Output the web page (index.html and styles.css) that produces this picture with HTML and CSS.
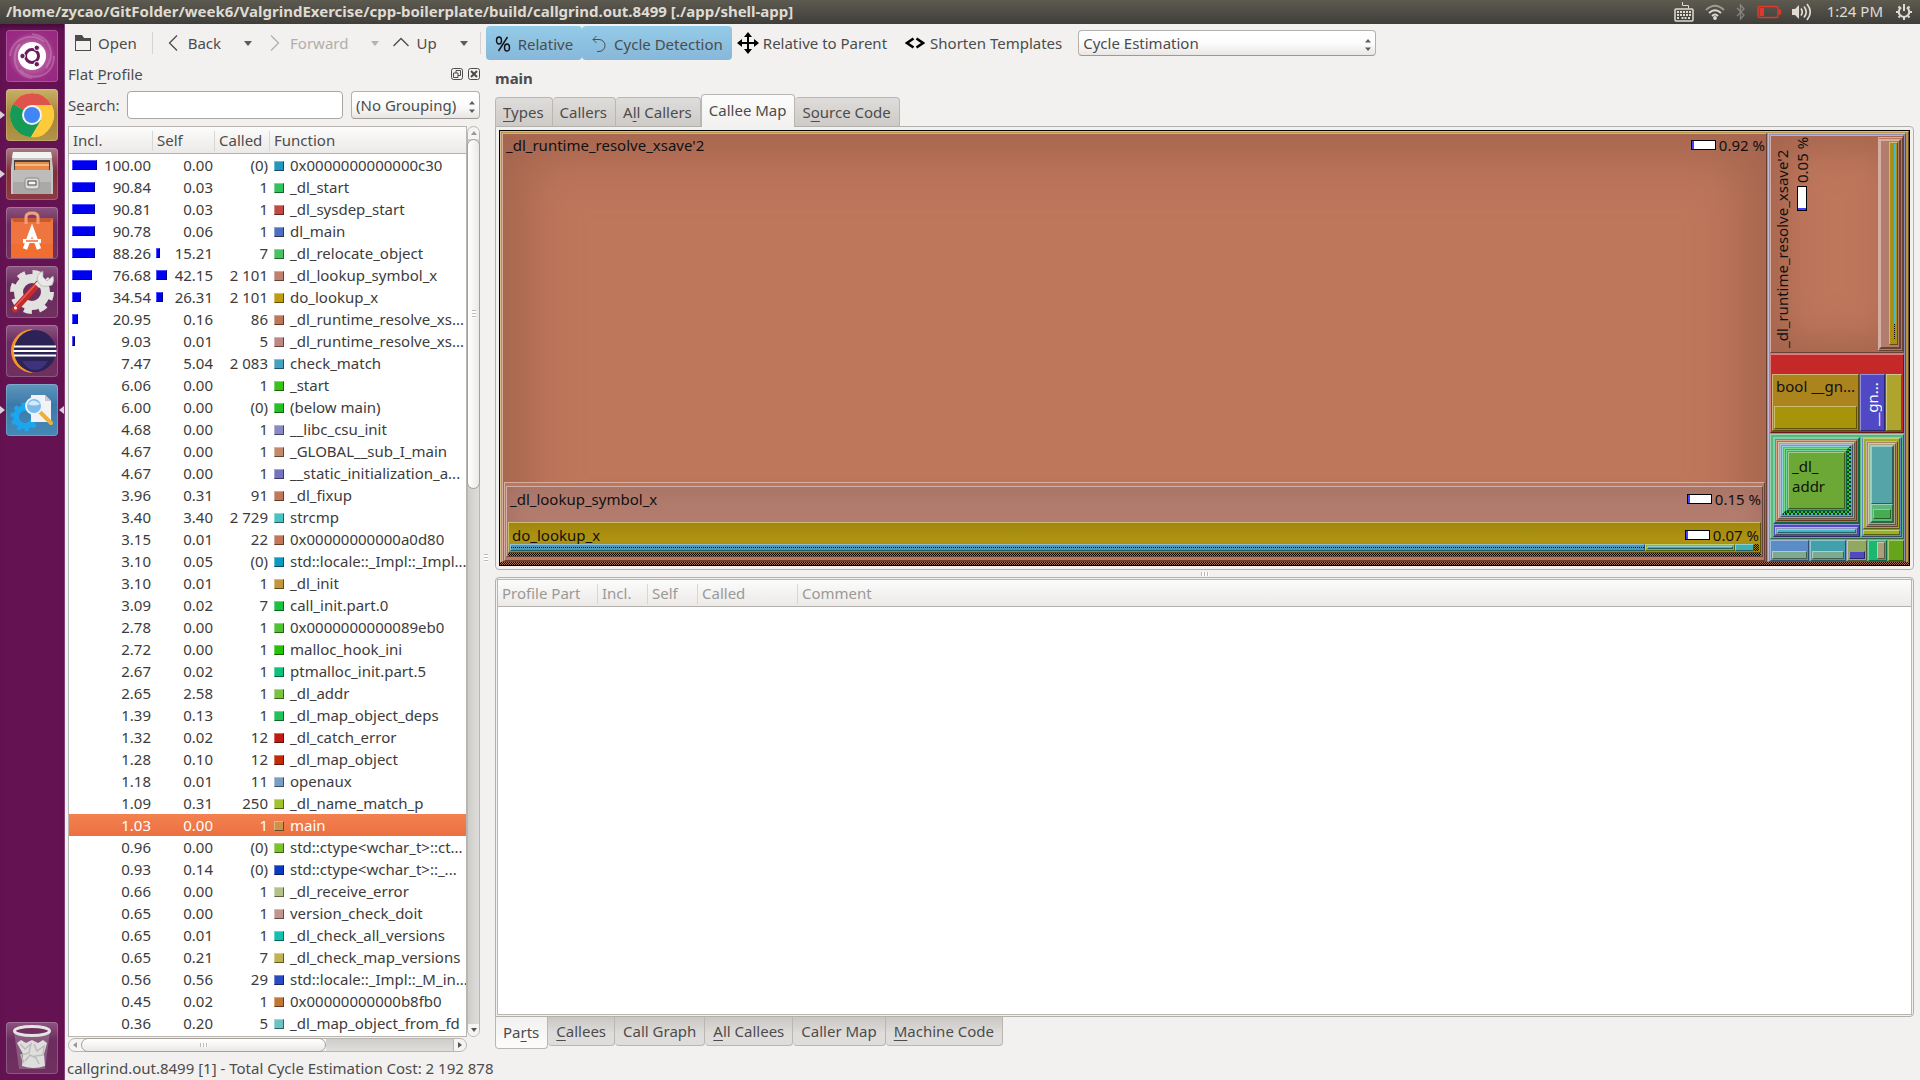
FILE: index.html
```html
<!DOCTYPE html>
<html lang="en">
<head>
<meta charset="utf-8">
<title>callgrind.out.8499 [./app/shell-app]</title>
<link rel="stylesheet" href="styles.css">
</head>
<body>
<header class="topbar">
  <h1 class="topbar-title">/home/zycao/GitFolder/week6/ValgrindExercise/cpp-boilerplate/build/callgrind.out.8499 [./app/shell-app]</h1>
  <div class="indicators">
    <svg width="20" height="20" viewBox="0 0 20 20" fill="none" stroke="#dfdbd2"><path d="M8.500 0v3.500h6v3"/><rect x="1" y="7" width="18" height="12" rx="1" stroke-width="1.500"/><path d="M3 10h14M3 13h14M3 16h3m1.500 0h5m1.500 0h3" stroke-width="2" stroke-dasharray="2 1"/></svg>
    <svg width="20" height="16" viewBox="0 0 20 16" fill="none" stroke="#dfdbd2" stroke-width="1.800"><path d="M1 6q9-8.500 18 0" opacity=".55"/><path d="M4 9q6-5.500 12 0M7 12q3-3 6 0"/><circle cx="10" cy="14" r="1" fill="#dfdbd2"/></svg>
    <svg class="dim" width="10" height="18" viewBox="0 0 10 18" fill="none" stroke="#dfdbd2" stroke-width="1.300"><path d="M1 5l7 7-3.500 4V2L8 6l-7 7"/></svg>
    <svg width="24" height="14" viewBox="0 0 24 14"><rect x="1" y="1.500" width="20" height="11" rx="1.500" fill="none" stroke="#df382c" stroke-width="1.500"/><path d="M2.500 3h4.500v8H2.500zM22 4.500h2v5h-2z" fill="#df382c"/></svg>
    <svg width="20" height="18" viewBox="0 0 20 18"><path d="M0 6h3l4-4v14l-4-4H0z" fill="#dfdbd2"/><path d="M9 5.500q2.500 3.500 0 7M12 3.500q4.500 5.500 0 11M15 1q6.500 8 0 16" fill="none" stroke="#dfdbd2" stroke-width="1.700"/></svg>
    <span class="clock">1:24 PM</span>
    <svg width="16" height="16" viewBox="0 0 16 16" fill="none" stroke="#dfdbd2" stroke-width="2"><path d="M5.200 3.400a5.200 5.200 0 1 0 5.600 0M8 0v7"/><path d="M8 13v3M0 8h3M13 8h3M2.500 2.500l1.500 1.500M13.500 2.500 12 4M2.500 13.500 4 12M13.500 13.500 12 12"/></svg>
  </div>
</header>
<div class="desktop">
<nav class="launcher" aria-label="Launcher">
  <a href="#dash" class="tile tile-dash" aria-label="Dash">
    <svg viewBox="0 0 52 52" width="52" height="52"><path d="M4 26C6 6 30 2 38 12M48 26c0 22-24 26-34 14M26 48C8 46 4 24 14 14M26 4c18 2 24 20 14 34" fill="none" stroke="#fff" stroke-width="2" opacity=".2"/><circle cx="26" cy="26" r="14" fill="#fff"/><circle cx="26" cy="26" r="6.500" fill="none" stroke="#6c1c5c" stroke-width="3"/><g fill="#6c1c5c" stroke="#fff" stroke-width="1"><circle cx="16.500" cy="26" r="2.700"/><circle cx="30.800" cy="17.800" r="2.700"/><circle cx="30.800" cy="34.200" r="2.700"/></g></svg></a>
  <a href="#chrome" class="tile tile-chrome running" aria-label="Chrome">
    <svg viewBox="0 0 52 52" width="52" height="52"><circle cx="26" cy="26" r="22" fill="#fcc934"/><path d="M26 26 7 15a22 22 0 0 1 38.500 1z" fill="#e0534a"/><path d="M26 26 7 15a22 22 0 0 0 18 33l10-17z" fill="#159a57"/><path d="M26 16h19.500q6 10-1 22T25 48l10-17z" fill="#fdca3b"/><circle cx="26" cy="26" r="10" fill="#f4f4f4"/><circle cx="26" cy="26" r="8" fill="#4285f4"/></svg></a>
  <a href="#files" class="tile tile-files running" aria-label="Files">
    <svg viewBox="0 0 52 52" width="52" height="52"><path d="M7 4h38l2 16v26H5V20z" fill="#c6c6c4"/><path d="M7 4h38l1 6H6z" fill="#f2f2f0"/><path d="M8 12h36v10H8z" fill="#45423e"/><path d="M9 14h34v8H9z" fill="#e88a45"/><path d="M9 17h34" stroke="#fce4c8"/><path d="M7 22h38v24H7z" fill="#aaa9a7"/><path d="M7 22h38v12H7z" fill="#bdbcba"/><rect x="19" y="30" width="14" height="11" rx="2.500" fill="#dcdcda" stroke="#888"/><rect x="22" y="33" width="8" height="4" fill="#f5f5f5" stroke="#444"/></svg></a>
  <a href="#software" class="tile" aria-label="Software">
    <svg viewBox="0 0 52 52" width="52" height="52"><path d="M5 11h42v40H5z" fill="#ee7540"/><path d="M5 37h42v14H5z" fill="#f26d30"/><path d="M5 11h42l-3 4H8z" fill="#c65a30"/><path d="M20 17v-7q0-4 6-4t6 4v7" fill="none" stroke="#f2a07c" stroke-width="3"/><path d="m19 42 7-19 7 19" fill="none" stroke="#fff" stroke-width="4.500"/><path d="M17 34h18" stroke="#fff" stroke-width="4"/><path d="M20 34h12" stroke="#ee6c30" stroke-width="1.500"/></svg></a>
  <a href="#settings" class="tile" aria-label="Settings">
    <svg viewBox="0 0 52 52" width="52" height="52"><circle cx="26" cy="26" r="13.500" fill="none" stroke="#e1e1df" stroke-width="9"/><circle cx="26" cy="26" r="19.500" fill="none" stroke="#e1e1df" stroke-width="5" stroke-dasharray="8 7.300"/><path d="m9 43 23-25" stroke="#c42a2a" stroke-width="6.500" stroke-linecap="round"/><path d="m8 42 22-24" stroke="#e8605a" stroke-width="1.500"/><circle cx="9.500" cy="42" r="1.500" fill="#fff"/><path d="m31 20 6-6" stroke="#e9e9e9" stroke-width="6"/><path d="M37 5q-8 4-5 11t14 3q3-5 1-9l-6 5-4-4z" fill="#e9e9e9" stroke="#aaa" stroke-width=".7"/></svg></a>
  <a href="#eclipse" class="tile" aria-label="Eclipse">
    <svg viewBox="0 0 52 52" width="52" height="52"><path d="M27 4a22 22 0 1 0 0 44q-16-8-16-22T27 4z" fill="#f4962a"/><circle cx="29" cy="26" r="21" fill="#2c2255"/><path d="M16 36h26q-5 9-13 9t-13-9z" fill="#3e317e"/><path d="M8 21.500h42M7.500 26h43M8 30.500h42" stroke="#fff" stroke-width="2.200"/></svg></a>
  <a href="#kcachegrind" class="tile tile-active running" aria-label="KCachegrind" aria-current="true">
    <svg viewBox="0 0 52 52" width="52" height="52"><circle cx="19" cy="33" r="9" fill="none" stroke="#1ba6ee" stroke-width="6"/><circle cx="19" cy="33" r="12.500" fill="none" stroke="#1ba6ee" stroke-width="4" stroke-dasharray="4 3.850"/><path d="M25 11h14l6 6v21H25z" fill="#f3f3f6"/><path d="M39 11v6h6z" fill="#c8c8d4"/><path d="m34 28 11 11" stroke="#e9b13c" stroke-width="4" stroke-linecap="round"/><circle cx="28" cy="22" r="8" fill="#7db9ea" stroke="#e9f3fb" stroke-width="2"/><path d="M22 20q5-7 12 0-6 3-12 0z" fill="#d4ebfb"/></svg></a>
  <a href="#trash" class="tile tile-trash" aria-label="Trash">
    <svg viewBox="0 0 52 52" width="52" height="52"><path d="M8 9h36l-5 38H13z" fill="#9d7896" opacity=".6"/><path d="m11 21 4-3 5 3 6-3 6 3 5-3 4 3-3 11 1 12q-11 4-23 0l1-12z" fill="#dededc"/><path d="m14 22 5 5 6-5-2 9-8 2 3 8m10-19 3 7 7-5-1 9-8 1 4 8m-14-3 5-6 6 3" fill="none" stroke="#bcbcba" stroke-width="1.500"/><ellipse cx="26" cy="9" rx="17.500" ry="4.500" fill="#70305f" stroke="#e4e4e2" stroke-width="3"/></svg></a>
</nav>
<main class="window">
  <div class="toolbar" role="toolbar">
    <button class="tool tool-open"><svg width="16" height="16" viewBox="0 0 16 16"><path d="M.5 0H7l2 3h7v13H0V0z" fill="#4c4c4c"/><path d="M1 6h14v9H1z" fill="#f2f1f0"/></svg>Open</button>
    <span class="sep"></span>
    <button class="tool tool-nav"><svg width="10" height="16" viewBox="0 0 10 16" fill="none" stroke="#4c4c4c" stroke-width="1.300"><path d="M9 .5 1.500 8 9 15.500"/></svg>Back</button>
    <button class="drop" aria-label="Back history"></button>
    <button class="tool tool-nav" disabled><svg width="10" height="16" viewBox="0 0 10 16" fill="none" stroke="#b0b0b0" stroke-width="1.300"><path d="M1 .5 8.500 8 1 15.500"/></svg>Forward</button>
    <button class="drop drop-mid" disabled aria-label="Forward history"></button>
    <button class="tool tool-up"><svg width="16" height="16" viewBox="0 0 16 16" fill="none" stroke="#4c4c4c" stroke-width="1.300"><path d="M.5 11 8 3.500 15.500 11"/></svg>Up</button>
    <button class="drop drop-end" aria-label="Up history"></button>
    <span class="sep sep-tight"></span>
    <button class="tool toggle" aria-pressed="true"><svg width="16" height="16" viewBox="0 0 16 16" fill="none" stroke="#111" stroke-width="1.400"><ellipse cx="4" cy="4.500" rx="2.500" ry="3.500"/><ellipse cx="12" cy="11.500" rx="2.500" ry="3.500"/><path d="M12.500 1l-9 14"/></svg>Relative</button>
    <button class="tool toggle toggle-wide" aria-pressed="true"><svg width="16" height="16" viewBox="0 0 16 16" fill="none" stroke="#4c4c4c"><path d="M5.500 0 2 3.500 5.500 7M2 3.500h6a6 6 0 0 1 0 12H6"/></svg>Cycle Detection</button>
    <button class="tool tool-parent"><svg width="22" height="22" viewBox="0 0 22 22"><path d="M11 2v18M2 11h18" stroke="#000" stroke-width="2"/><path d="m11 0 4 5H7zM11 22l4-5H7zM0 11l5-4v8zM22 11l-5-4v8z"/></svg>Relative to Parent</button>
    <button class="tool tool-shorten"><svg width="20" height="12" viewBox="0 0 20 12" fill="none" stroke="#000" stroke-width="2.600"><path d="M8.500 1.500 2 6l6.500 4.500M11.500 1.500 18 6l-6.500 4.500"/></svg>Shorten Templates</button>
    <span class="combo combo-event"><select aria-label="Primary event type"><option>Cycle Estimation</option></select><svg width="6" height="12" viewBox="0 0 6 12"><path d="M0 3.500h6L3 0zM0 8.500h6L3 12z" fill="#5c5c5c"/></svg></span>
  </div>
  <div class="work">
    <section class="dock">
      <div class="dock-title"><h2>Flat <u>P</u>rofile</h2>
        <button class="mini" aria-label="Float"><svg width="12" height="12" viewBox="0 0 12 12" fill="none" stroke="#4c4c4c"><rect x=".5" y=".5" width="11" height="11" rx="2"/><path d="M5 5V2.500h4.500v5H7M2.500 5H7v4.500H2.500z"/></svg></button>
        <button class="mini" aria-label="Close"><svg width="12" height="12" viewBox="0 0 12 12" fill="none" stroke="#4c4c4c"><rect x=".5" y=".5" width="11" height="11" rx="2"/><path d="m3 3 6 6M9 3 3 9" stroke-width="2"/></svg></button>
      </div>
      <div class="search"><label for="q">S<u>e</u>arch:</label><input id="q" type="text">
        <span class="combo combo-group"><select aria-label="Grouping"><option>(No Grouping)</option></select><svg width="6" height="12" viewBox="0 0 6 12"><path d="M0 3.500h6L3 0zM0 8.500h6L3 12z" fill="#5c5c5c"/></svg></span></div>
      <div class="list">
        <div class="list-view">
        <table class="profile">
          <colgroup><col class="c-incl"><col class="c-self"><col class="c-called"><col></colgroup>
          <thead><tr><th>Incl.</th><th>Self</th><th>Called</th><th>Function</th></tr></thead>
          <tbody>
<tr><td><i class="bar" style="width:25px"></i>100.00</td><td>0.00</td><td>(0)</td><td><i class="sw" style="--c:#2596be"></i>0x0000000000000c30</td></tr>
<tr><td><i class="bar" style="width:23px"></i>90.84</td><td>0.03</td><td>1</td><td><i class="sw" style="--c:#32c25e"></i>_dl_start</td></tr>
<tr><td><i class="bar" style="width:23px"></i>90.81</td><td>0.03</td><td>1</td><td><i class="sw" style="--c:#c24a42"></i>_dl_sysdep_start</td></tr>
<tr><td><i class="bar" style="width:23px"></i>90.78</td><td>0.06</td><td>1</td><td><i class="sw" style="--c:#4e6ec0"></i>dl_main</td></tr>
<tr><td><i class="bar" style="width:23px"></i>88.26</td><td><i class="bar" style="width:4px"></i>15.21</td><td>7</td><td><i class="sw" style="--c:#46c262"></i>_dl_relocate_object</td></tr>
<tr><td><i class="bar" style="width:20px"></i>76.68</td><td><i class="bar" style="width:11px"></i>42.15</td><td>2 101</td><td><i class="sw" style="--c:#c08070"></i>_dl_lookup_symbol_x</td></tr>
<tr><td><i class="bar" style="width:9px"></i>34.54</td><td><i class="bar" style="width:7px"></i>26.31</td><td>2 101</td><td><i class="sw" style="--c:#c09c10"></i>do_lookup_x</td></tr>
<tr><td><i class="bar" style="width:6px"></i>20.95</td><td>0.16</td><td>86</td><td><i class="sw" style="--c:#c0765a"></i>_dl_runtime_resolve_xs...</td></tr>
<tr><td><i class="bar" style="width:3px"></i>9.03</td><td>0.01</td><td>5</td><td><i class="sw" style="--c:#c08686"></i>_dl_runtime_resolve_xs...</td></tr>
<tr><td>7.47</td><td>5.04</td><td>2 083</td><td><i class="sw" style="--c:#46a0c2"></i>check_match</td></tr>
<tr><td>6.06</td><td>0.00</td><td>1</td><td><i class="sw" style="--c:#3ac21a"></i>_start</td></tr>
<tr><td>6.00</td><td>0.00</td><td>(0)</td><td><i class="sw" style="--c:#22c222"></i>(below main)</td></tr>
<tr><td>4.68</td><td>0.00</td><td>1</td><td><i class="sw" style="--c:#8a8ac2"></i>__libc_csu_init</td></tr>
<tr><td>4.67</td><td>0.00</td><td>1</td><td><i class="sw" style="--c:#c28a6a"></i>_GLOBAL__sub_I_main</td></tr>
<tr><td>4.67</td><td>0.00</td><td>1</td><td><i class="sw" style="--c:#7672c2"></i>__static_initialization_a...</td></tr>
<tr><td>3.96</td><td>0.31</td><td>91</td><td><i class="sw" style="--c:#c2765a"></i>_dl_fixup</td></tr>
<tr><td>3.40</td><td>3.40</td><td>2 729</td><td><i class="sw" style="--c:#4ac2c2"></i>strcmp</td></tr>
<tr><td>3.15</td><td>0.01</td><td>22</td><td><i class="sw" style="--c:#c2765a"></i>0x00000000000a0d80</td></tr>
<tr><td>3.10</td><td>0.05</td><td>(0)</td><td><i class="sw" style="--c:#0a9ac2"></i>std::locale::_Impl::_Impl...</td></tr>
<tr><td>3.10</td><td>0.01</td><td>1</td><td><i class="sw" style="--c:#c2963a"></i>_dl_init</td></tr>
<tr><td>3.09</td><td>0.02</td><td>7</td><td><i class="sw" style="--c:#1ac242"></i>call_init.part.0</td></tr>
<tr><td>2.78</td><td>0.00</td><td>1</td><td><i class="sw" style="--c:#4ec232"></i>0x0000000000089eb0</td></tr>
<tr><td>2.72</td><td>0.00</td><td>1</td><td><i class="sw" style="--c:#26c206"></i>malloc_hook_ini</td></tr>
<tr><td>2.67</td><td>0.02</td><td>1</td><td><i class="sw" style="--c:#0ac27a"></i>ptmalloc_init.part.5</td></tr>
<tr><td>2.65</td><td>2.58</td><td>1</td><td><i class="sw" style="--c:#7ac242"></i>_dl_addr</td></tr>
<tr><td>1.39</td><td>0.13</td><td>1</td><td><i class="sw" style="--c:#22c25a"></i>_dl_map_object_deps</td></tr>
<tr><td>1.32</td><td>0.02</td><td>12</td><td><i class="sw" style="--c:#c21a12"></i>_dl_catch_error</td></tr>
<tr><td>1.28</td><td>0.10</td><td>12</td><td><i class="sw" style="--c:#c22a06"></i>_dl_map_object</td></tr>
<tr><td>1.18</td><td>0.01</td><td>11</td><td><i class="sw" style="--c:#7a9ec2"></i>openaux</td></tr>
<tr><td>1.09</td><td>0.31</td><td>250</td><td><i class="sw" style="--c:#a2c22e"></i>_dl_name_match_p</td></tr>
<tr class="selected"><td>1.03</td><td>0.00</td><td>1</td><td><i class="sw" style="--c:#cc924a"></i>main</td></tr>
<tr><td>0.96</td><td>0.00</td><td>(0)</td><td><i class="sw" style="--c:#7ac22e"></i>std::ctype&lt;wchar_t&gt;::ct...</td></tr>
<tr><td>0.93</td><td>0.14</td><td>(0)</td><td><i class="sw" style="--c:#0a3ac2"></i>std::ctype&lt;wchar_t&gt;::_...</td></tr>
<tr><td>0.66</td><td>0.00</td><td>1</td><td><i class="sw" style="--c:#b4c28a"></i>_dl_receive_error</td></tr>
<tr><td>0.65</td><td>0.00</td><td>1</td><td><i class="sw" style="--c:#c2968e"></i>version_check_doit</td></tr>
<tr><td>0.65</td><td>0.01</td><td>1</td><td><i class="sw" style="--c:#12c2ae"></i>_dl_check_all_versions</td></tr>
<tr><td>0.65</td><td>0.21</td><td>7</td><td><i class="sw" style="--c:#c2b252"></i>_dl_check_map_versions</td></tr>
<tr><td>0.56</td><td>0.56</td><td>29</td><td><i class="sw" style="--c:#2a4ac2"></i>std::locale::_Impl::_M_in...</td></tr>
<tr><td>0.45</td><td>0.02</td><td>1</td><td><i class="sw" style="--c:#c27636"></i>0x00000000000b8fb0</td></tr>
<tr><td>0.36</td><td>0.20</td><td>5</td><td><i class="sw" style="--c:#6ac2c2"></i>_dl_map_object_from_fd</td></tr>
          </tbody>
        </table>
        </div>
        <div class="vscroll"><span class="arrow-cap"><svg width="6" height="4" viewBox="0 0 6 4"><path d="M0 4h6L3 0z" fill="#999"/></svg></span><span class="vthumb"><i class="grip"></i></span><span class="arrow-cap arrow-down"><svg width="6" height="4" viewBox="0 0 6 4"><path d="M0 0h6L3 4z" fill="#555"/></svg></span></div>
      </div>
      <div class="hscroll"><span class="cap"><svg width="4" height="6" viewBox="0 0 4 6"><path d="M4 0v6L0 3z" fill="#999"/></svg></span><span class="hthumb"><i class="grip grip-x"></i></span><span class="track"></span><span class="cap"><svg width="4" height="6" viewBox="0 0 4 6"><path d="M0 0v6l4-3z" fill="#555"/></svg></span></div>
    </section>
    <div class="split-v"><i class="grip"></i></div>
    <section class="detail">
      <h2 class="detail-title">main</h2>
      <div class="tabs tabs-top" role="tablist">
        <button role="tab"><u>T</u>ypes</button><button role="tab">Callers</button><button role="tab">A<u>l</u>l Callers</button><button role="tab" class="on" aria-selected="true">Callee Map</button><button role="tab">S<u>o</u>urce Code</button>
      </div>
      <div class="pane pane-map">
        <div class="treemap">
          <div class="cell root c-main">
            <div class="cell major cushion c-brown">
              <div class="caption"><span>_dl_runtime_resolve_xsave'2</span><span class="cost"><i class="gauge"></i>0.92 %</span></div>
              <div class="cell fixup c-brown">
                <div class="cell lookup c-rose">
                  <div class="caption"><span>_dl_lookup_symbol_x</span><span class="cost"><i class="gauge"></i>0.15 %</span></div>
                  <div class="cell dolookup c-gold">
                    <div class="caption"><span>do_lookup_x</span><span class="cost"><i class="gauge"></i>0.07 %</span></div>
                    <div class="strip"><div class="cell c-sky"><i class="dots"></i></div><div class="cell c-lime thin"><i class="cell c-teal"></i></div><div class="cell c-teal short"></div><i class="dither"></i></div>
                  </div>
                  <i class="hatch"></i>
                </div>
              </div>
            </div>
            <div class="cell side c-lav">
              <div class="cell resolve cushion c-brown">
                <span class="vtext">_dl_runtime_resolve_xsave'2</span>
                <span class="vtext vcost"><i class="gauge"></i>0.05 %</span>
                <div class="cell slim c-brown"><div class="cell c-brown"><div class="cell c-rose"><div class="cell c-gold"><i class="cyanline"></i><i class="vdots"></i></div></div></div></div>
              </div>
              <div class="cell catch c-red">
                <div class="cell bool c-amber"><span>bool __gn...</span><div class="cell c-olive"></div></div>
                <div class="cell gn c-blue"><span class="vtext">__gn...</span></div>
                <div class="cell mustard c-mustard"></div>
              </div>
              <div class="cell init c-mint">
                <div class="init-left">
                  <div class="cell c-green addr"><div class="cell c-green"><div class="cell c-orange"><div class="cell c-cream"><div class="cell c-lav"><div class="cell c-cyan shade"><div class="cell c-bright shade"><div class="cell c-green"><div class="cell c-leaf"><span>_dl_<br>addr</span></div></div></div></div></div></div></div></div></div>
                  <div class="cell bluebar c-blue"><div class="cell c-lav"><div class="cell c-cyan"></div></div></div>
                </div>
                <div class="cell peri c-peri"><div class="cell c-lime grow"><div class="cell c-rose"><div class="cell c-cream"><div class="cell c-mint"><div class="cell c-aqua grow"></div><div class="cell c-mint foot"><div class="cell c-grass"></div></div></div></div></div></div><div class="cell c-lime base"></div></div>
              </div>
              <div class="bottoms">
                <div class="cell b1 c-steel"><div class="cell c-sage"></div></div><div class="cell b2 c-aqua2"><div class="cell c-sage"></div></div><div class="cell b3 c-moss"><div class="cell c-blue"></div></div><div class="cell b4 c-green"><div class="cell c-tan"></div></div><div class="cell b5 c-leaf2"></div>
              </div>
            </div>
          </div>
          <i class="hatch"></i>
        </div>
      </div>
      <div class="split-h"><i class="grip grip-x"></i></div>
      <div class="pane pane-parts">
        <div class="parts-view">
          <table class="parts"><colgroup><col class="p-part"><col class="p-incl"><col class="p-self"><col class="p-called"><col></colgroup><thead><tr><th>Profile Part</th><th>Incl.</th><th>Self</th><th>Called</th><th>Comment</th></tr></thead></table>
        </div>
      </div>
      <div class="tabs tabs-bottom" role="tablist">
        <button role="tab" class="on" aria-selected="true">Pa<u>r</u>ts</button><button role="tab"><u>C</u>allees</button><button role="tab">Call Graph</button><button role="tab"><u>A</u>ll Callees</button><button role="tab">Caller Map</button><button role="tab"><u>M</u>achine Code</button>
      </div>
    </section>
  </div>
  <footer class="status">callgrind.out.8499 [1] - Total Cycle Estimation Cost: 2 192 878</footer>
</main>
</div>
</body>
</html>
```
FILE: styles.css
```css
* { box-sizing: border-box; }
body {
  margin: 0;
  height: 100vh;
  display: flex;
  flex-direction: column;
  overflow: hidden;
  background: #f2f1f0;
  color: #4c4c4c;
  font: 15px/22px "Noto Sans", "Open Sans", sans-serif;
}
button, input, select { font: inherit; color: inherit; }
button { background: none; border: 0; padding: 0; white-space: nowrap; }
h1, h2 { margin: 0; font-size: inherit; font-weight: 400; }
u { text-underline-offset: 3px; text-decoration-thickness: 1px; }
svg { display: block; flex: none; }
i { display: block; }

/* top panel */
.topbar {
  flex: none;
  height: 24px;
  padding: 0 8px 0 6px;
  display: flex;
  align-items: center;
  justify-content: space-between;
  background: linear-gradient(#5d5a50, #3f3e39);
  color: #dfdbd2;
}
.topbar-title { font-size: 15px; line-height: 20px; padding-bottom: 2px; font-weight: 700; white-space: nowrap; }
.indicators { display: flex; align-items: center; gap: 11px; }
.indicators .dim { opacity: .4; }
.clock { margin: 0 2px 0 4px; line-height: 20px; padding-bottom: 2px; }

.desktop { flex: 1; min-height: 0; display: flex; }

/* launcher */
.launcher {
  flex: none;
  width: 65px;
  padding: 6px;
  display: flex;
  flex-direction: column;
  gap: 7px;
  background: #651253;
  border-right: 1px solid #83417a;
  box-shadow: inset 0 6px 6px -4px #3c0a31;
}
.tile {
  position: relative;
  width: 52px;
  height: 52px;
  border-radius: 4px;
  background: linear-gradient(#8d5480, #6b2c5f 35%, #70305f);
  box-shadow: inset 0 0 0 1px #ffffff33;
}
.tile-dash { background: radial-gradient(circle, #d79bc5, #9b2c83 65%, #962580); }
.tile-chrome { background: linear-gradient(#c9b069, #a48435 50%, #b3954a); }
.tile-files { background: linear-gradient(#a87a85, #81303a 45%, #8b3a42); }
.tile-active { background: linear-gradient(#5f96bd, #3b7aa8 40%, #4589b7); }
.tile-trash { margin-top: auto; }
.running::before, .tile-active::after {
  content: "";
  position: absolute;
  top: 22px;
  left: -6px;
  border: 4px solid transparent;
  border-left: 5px solid #d8d0d6;
  border-right: 0;
}
.tile-active::after {
  left: auto;
  right: -6px;
  border-left: 0;
  border-right: 5px solid #d8d0d6;
}

.window { flex: 1; min-width: 0; display: flex; flex-direction: column; }

/* toolbar */
.toolbar { flex: none; height: 40px; padding: 2px 0 4px 10px; display: flex; align-items: center; }
.tool { height: 34px; display: flex; align-items: center; gap: 7px; }
.tool:disabled { color: #b0aeab; }
.tool-nav { gap: 10px; }
.sep { width: 1px; height: 22px; margin: 0 15px; background: #d5d2cf; }
.sep-tight { margin: 0 5px 0 11px; }
.drop { width: 49px; height: 34px; padding-left: 23px; display: flex; align-items: center; }
.drop-mid { width: 45px; }
.drop-end { width: 32px; }
.drop::before { content: ""; border: 4px solid transparent; border-top: 5px solid #5a5a5a; border-bottom: 0; }
.drop:disabled::before { border-top-color: #b5b3b0; }
.toggle {
  padding: 2px 9px 0;
  border-radius: 4px;
  background: linear-gradient(#93cce8, #87b7d9);
}
.toggle-wide { margin-right: 5px; }
.tool-parent { gap: 4px; margin-right: 18px; }
.tool-shorten { gap: 5px; margin-right: 16px; }

.combo { position: relative; flex: none; }
.combo select {
  appearance: none;
  width: 100%;
  height: 100%;
  padding: 0 4px;
  border: 1px solid #b4b1ad;
  border-bottom-color: #9d9a96;
  border-radius: 4px;
  background: linear-gradient(#fff, #fcfcfc 50%, #e9e7e5);
}
.combo svg { position: absolute; right: 5px; top: 9px; }
.combo-event { width: 298px; height: 26px; }
.combo-group { width: 129px; height: 28px; }
.combo-group svg { top: 10px; }

/* flat profile dock */
.work { flex: 1; min-height: 0; display: flex; padding: 0 6px 0 3px; }
.dock { flex: none; width: 412px; display: flex; flex-direction: column; }
.dock-title { height: 20px; margin-bottom: 2px; display: flex; align-items: center; gap: 5px; }
.dock-title h2 { flex: 1; }
.search { height: 28px; margin: 5px 0 7px; display: flex; align-items: center; }
.search input {
  flex: 1;
  min-width: 0;
  height: 28px;
  margin: 0 8px 0 7px;
  border: 1px solid #aaa7a3;
  border-radius: 4px;
  background: #fff;
}
.list { flex: 1; min-height: 0; display: flex; }
.list-view { flex: 1; min-width: 0; overflow: hidden; background: #fff; border: 1px solid #b9b6b2; }
table { width: 100%; table-layout: fixed; border-collapse: separate; border-spacing: 0; }
th {
  height: 27px;
  padding: 0 4px;
  text-align: left;
  font-weight: 400;
  white-space: nowrap;
  background: linear-gradient(90deg, #d9d7d4, #d9d7d4) right 4px / 1px 20px no-repeat, linear-gradient(#fcfcfc, #eceae8);
  border-bottom: 1px solid #b4b1ad;
}
th:last-child { background: linear-gradient(#fcfcfc, #eceae8); }
.c-incl { width: 84px; }
.c-self { width: 62px; }
.c-called { width: 55px; }
.profile th { padding-left: 4px; }
.profile td { height: 22px; padding: 0 2px 0 3px; text-align: right; white-space: nowrap; color: #3c3c3c; }
.profile td:last-child { text-align: left; padding: 0 0 0 4px; }
.bar { float: left; height: 10px; margin-top: 6px; background: #0000f0; border: 1px solid; border-color: #5050ff #00008c #00008c #5050ff; }
.sw {
  display: inline-block;
  width: 10px;
  height: 10px;
  margin-right: 6px;
  background: var(--c);
  border: 1px solid;
  border-color: color-mix(in srgb, var(--c), #fff 35%) color-mix(in srgb, var(--c), #000 50%) color-mix(in srgb, var(--c), #000 50%) color-mix(in srgb, var(--c), #fff 35%);
}
.profile .selected td { color: #fff; background: linear-gradient(#f38150, #ec7040); }

.vscroll { width: 13px; display: flex; flex-direction: column; background: linear-gradient(90deg, #cfcdca, #e0dedc); border: 1px solid #b9b6b2; border-radius: 7px; }
.vthumb { height: 350px; background: linear-gradient(90deg, #fff, #ebe9e7); border: 1px solid #a3a09c; border-radius: 7px; display: flex; align-items: center; justify-content: center; margin: 0 -1px; }
.arrow-cap { height: 12px; display: flex; align-items: center; justify-content: center; background: #f5f4f3; border-radius: 6px 6px 0 0; }
.arrow-down { margin-top: auto; border-radius: 0 0 6px 6px; }
.grip { width: 4px; height: 8px; background: repeating-linear-gradient(#bbb8b4 0 1px, #fff 1px 3px); }
.grip-x { width: 8px; height: 4px; background: repeating-linear-gradient(90deg, #bbb8b4 0 1px, #fff 1px 3px); }
.hscroll { flex: none; height: 14px; width: 399px; margin-top: 1px; display: flex; border: 1px solid #b9b6b2; border-radius: 7px; background: #f5f4f3; }
.hthumb { width: 245px; margin: -1px 0; border: 1px solid #a3a09c; border-radius: 7px; background: linear-gradient(#fff, #ebe9e7); display: flex; align-items: center; justify-content: center; }
.cap { width: 12px; display: flex; align-items: center; justify-content: center; }
.track { flex: 1; background: linear-gradient(#cfcdca, #e0dedc); border-right: 1px solid #b9b6b2; }
.split-v { flex: none; width: 15px; padding-right: 4px; display: flex; align-items: center; justify-content: center; }

/* detail side */
.detail { flex: 1; min-width: 0; display: flex; flex-direction: column; padding-bottom: 3px; }
.detail-title { height: 30px; line-height: 28px; font-weight: 700; }
.tabs { display: flex; flex: none; height: 32px; }
.tabs button {
  height: 29px;
  padding: 0 8px;
  border: 1px solid #bab7b3;
  border-left-width: 0;
}
.tabs button:first-child { border-left-width: 1px; padding-left: 7px; }
.tabs-top { align-items: flex-end; }
.tabs-top button { padding: 0 8px 1px 7px; border-bottom: 0; border-radius: 4px 4px 0 0; background: linear-gradient(#dfdddb, #cdcac7); }
.tabs-bottom button { border-top: 0; border-radius: 0 0 4px 4px; background: linear-gradient(#c9c6c3, #dfdddb 60%); }
.tabs .on { height: 32px; position: relative; }
.tabs-top .on { background: linear-gradient(#fcfcfc, #f2f1f0); margin-bottom: -1px; padding-bottom: 3px; border-left-width: 1px; height: 33px; }
.tabs-bottom .on { background: linear-gradient(#f2f1f0, #fcfcfc); padding-bottom: 2px; }
.pane { flex: 1; min-height: 0; border: 1px solid #b4b1ad; border-radius: 0 4px 4px 4px; padding: 3px; }
.pane-parts { border-radius: 4px 4px 4px 0; padding: 1px; }
.parts-view { height: 100%; background: #fff; border: 1px solid #b9b6b2; }
.parts { color: #9b9996; }
.p-part { width: 100px; }
.p-incl, .p-self { width: 50px; }
.p-called { width: 100px; }
.split-h { flex: none; height: 7px; display: flex; align-items: center; justify-content: center; }
.status { flex: none; height: 28px; padding: 5px 2px 0; line-height: 22px; }

/* callee treemap */
.treemap { height: 100%; border: 1px solid #000; display: flex; flex-direction: column; color: #111; overflow: hidden; }
.cell {
  min-width: 0;
  background: var(--c);
  border: 1px solid;
  border-color: color-mix(in srgb, var(--c), #fff 40%) color-mix(in srgb, var(--c), #000 45%) color-mix(in srgb, var(--c), #000 45%) color-mix(in srgb, var(--c), #fff 40%);
}
.c-main { --c: #b89444; }
.c-brown { --c: #be775b; }
.c-rose { --c: #b27c6e; }
.c-gold { --c: #ab8f10; }
.c-sky { --c: #4398bb; }
.c-lime { --c: #9cb020; }
.c-teal { --c: #40b0b0; }
.c-lav { --c: #8e8ebc; }
.c-red { --c: #c42828; }
.c-amber { --c: #ab841e; }
.c-olive { --c: #a8940a; }
.c-blue { --c: #5048c4; }
.c-mustard { --c: #aea42e; }
.c-mint { --c: #5bb680; }
.c-green { --c: #1cb872; }
.c-orange { --c: #d0603c; }
.c-cream { --c: #a8a878; }
.c-cyan { --c: #40b8c4; }
.c-bright { --c: #1cc41c; }
.c-leaf { --c: #6ca836; }
.c-peri { --c: #6a88c8; }
.c-aqua { --c: #55a5a8; }
.c-grass { --c: #46ac50; }
.c-steel { --c: #5b8cc6; }
.c-sage { --c: #7eaa92; }
.c-aqua2 { --c: #42a0ac; }
.c-moss { --c: #92a860; }
.c-tan { --c: #a8a07a; }
.c-leaf2 { --c: #66a41c; }
.cushion { box-shadow: inset 0 0 50px 24px #a5654f; }
.resolve.cushion { box-shadow: inset 0 0 36px 14px #a5654f; }
.hatch { flex: none; height: 3px; background: repeating-conic-gradient(#000 0 25%, #a87050 0 50%) 0 0 / 2px 2px; }
.root {
  flex: 1;
  min-height: 0;
  display: flex;
  gap: 1px;
  padding: 1px 2px 0 1px;
  border-bottom: 0;
}
.major { flex: 1; display: flex; flex-direction: column; justify-content: space-between; padding: 0 1px 0 1px; }
.caption { display: flex; justify-content: space-between; align-items: flex-start; padding: 0 0 0 2px; }
.cost { display: flex; align-items: center; gap: 3px; }
.gauge { width: 25px; height: 10px; border: 1px solid #000; background: linear-gradient(90deg, #4040ff 2px, #fff 2px); }
.fixup { padding: 3px 1px 3px 1px; }
.lookup { padding: 0 1px 0 1px; box-shadow: inset 0 0 24px #92605680; }
.lookup > .caption { padding-top: 1px; height: 35px; }
.dolookup { padding: 0 1px 1px; height: 31px; display: flex; flex-direction: column; background: linear-gradient(#a08610, #b09410 60%, #a08610); }
.dolookup > .caption { height: 21px; line-height: 24px; }
.strip { display: flex; height: 7px; }
.strip > .c-sky { flex: 1; }
.dots { height: 1px; margin-top: 2px; background: repeating-linear-gradient(90deg, #111 0 1px, transparent 1px 2px); }
.thin { width: 90px; padding: 1px; }
.thin > i { height: 3px; }
.short { width: 19px; }
.dither { width: 5px; background: repeating-conic-gradient(#000 0 25%, transparent 0 50%) 0 0 / 2px 2px; }

.side { flex: none; width: 138px; display: flex; flex-direction: column; gap: 1px; padding: 1px 1px 0 1px; }
.vtext { writing-mode: vertical-rl; transform: rotate(180deg); white-space: nowrap; line-height: 20px; }
.resolve { flex: 1; min-height: 0; display: flex; padding: 1px 0; }
.resolve > .vtext { margin-left: 1px; height: 211px; }
.resolve > .vtext.vcost { margin-left: 0; height: 212px; display: flex; align-items: center; justify-content: flex-end; gap: 3px; }
.vcost .gauge { width: 10px; height: 25px; background: linear-gradient(#4040ff 2px, #fff 2px); }
.slim { width: 25px; margin-left: auto; padding: 1px 1px 1px 0; display: flex; }
.slim .cell { flex: 1; display: flex; }
.slim .c-rose { padding: 1px 1px 2px 8px; }
.slim .c-gold { flex-direction: column; padding: 1px 1px 4px 4px; }
.cyanline { flex: 1; width: 2px; background: #48b8d8; }
.vdots { height: 16px; width: 1px; background: repeating-linear-gradient(#111 0 1px, transparent 1px 2px); }
.catch { height: 79px; padding: 19px 1px 1px; display: flex; gap: 1px; }
.bool { flex: 1; display: flex; flex-direction: column; padding: 0 1px 1px; }
.bool span { flex: 1; padding-left: 2px; white-space: nowrap; }
.bool .cell { height: 23px; }
.gn { width: 25px; color: #fff; }
.gn .vtext { height: 100%; padding-top: 4px; line-height: 23px; }
.mustard { width: 16px; }
.init { height: 105px; display: flex; gap: 1px; padding: 2px 1px 1px 2px; }
.init-left { flex: 1; display: flex; flex-direction: column; }
.addr { flex: 1; display: flex; }
.addr .cell { flex: 1; display: flex; padding: 1px; }
.addr .c-leaf { padding: 3px 3px 0; line-height: 20px; }
.addr .shade { border-right: 2px dotted #153a20; border-bottom: 2px dotted #153a20; padding: 1px 0 0 1px; }
.bluebar { height: 13px; padding: 2px 1px 1px; }
.bluebar > .cell { padding: 1px; height: 8px; }
.bluebar > .cell > .cell { height: 4px; }
.peri { width: 41px; padding: 0 1px 1px; display: flex; flex-direction: column; gap: 1px; }
.peri .grow, .peri .cell .cell { flex: 1; display: flex; flex-direction: column; }
.peri .c-lime.grow { padding: 2px 1px 1px 2px; }
.peri .c-rose, .peri .c-cream { padding: 1px; }
.peri .foot.cell { flex: none; height: 18px; padding: 4px 1px 2px; }
.peri .base { height: 5px; flex: none; }
.bottoms { display: flex; height: 21px; gap: 1px; }
.bottoms > .cell { display: flex; padding: 1px; align-items: flex-end; }
.bottoms .cell .cell { flex: 1; height: 8px; }
.b1 { width: 39px; }
.b2 { width: 36px; }
.b3 { width: 20px; }
.b4 { width: 19px; }
.b4.cell { padding-left: 8px; }
.b4.cell .cell { height: 17px; }
.b5 { flex: 1; }
```
